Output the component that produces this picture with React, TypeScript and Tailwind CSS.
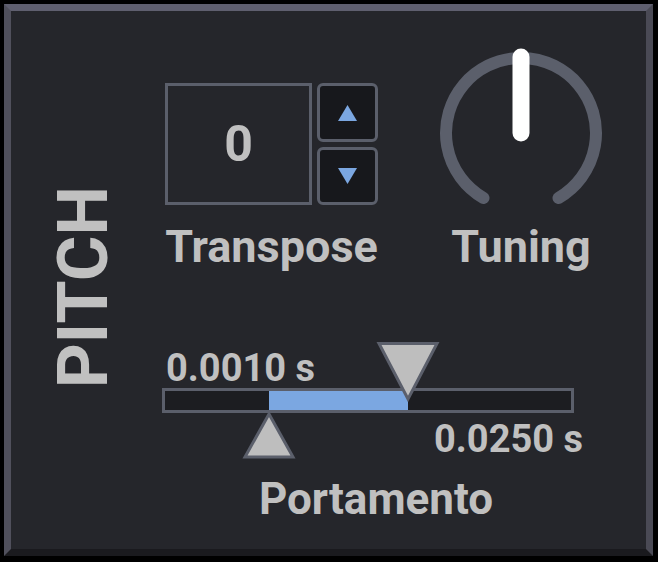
import React from "react";

const font = { fontFamily: "Roboto, 'Noto Sans', sans-serif" };

function Knob() {
  // 300° arc, gap at the bottom
  const cx = 85;
  const cy = 85;
  const r = 75;
  const start = (-150 * Math.PI) / 180;
  const end = (150 * Math.PI) / 180;
  const x1 = cx + r * Math.sin(start);
  const y1 = cy - r * Math.cos(start);
  const x2 = cx + r * Math.sin(end);
  const y2 = cy - r * Math.cos(end);
  return (
    <svg width="170" height="170" viewBox="0 0 170 170">
      <path
        d={`M ${x1} ${y1} A ${r} ${r} 0 1 1 ${x2} ${y2}`}
        fill="none"
        stroke="#5b5f6b"
        strokeWidth="12"
        strokeLinecap="round"
      />
      <line x1={cx} y1={cy} x2={cx} y2={9} stroke="#ffffff" strokeWidth="17" strokeLinecap="round" />
    </svg>
  );
}

function Stepper() {
  return (
    <div className="flex gap-[5px]">
      <div className="w-[147px] h-[122px] border-[3px] border-[#5b5f6b] flex items-center justify-center">
        <span className="text-[50px] font-bold text-[#c0c0c0] leading-none">0</span>
      </div>
      <div className="flex flex-col gap-[5px]">
        <button className="w-[61px] h-[59px] rounded-[6px] border-[3px] border-[#5b5f6b] bg-[#17181c] flex items-center justify-center">
          <svg width="19" height="16" viewBox="0 0 19 16">
            <polygon points="9.5,0 19,16 0,16" fill="#7ba7e1" />
          </svg>
        </button>
        <button className="w-[61px] h-[58px] rounded-[6px] border-[3px] border-[#5b5f6b] bg-[#17181c] flex items-center justify-center">
          <svg width="19" height="16" viewBox="0 0 19 16">
            <polygon points="0,0 19,0 9.5,16" fill="#7ba7e1" />
          </svg>
        </button>
      </div>
    </div>
  );
}

function Portamento() {
  return (
    <div className="relative w-[412px] h-[116px]">
      <div className="absolute left-0 top-[46px] w-[412px] h-[25px] border-[3px] border-[#5b5f6b] bg-[#1c1d21]">
        <div className="absolute left-[104px] top-0 w-[139px] h-[19px] bg-[#7ba7e1]" />
      </div>
      <span className="absolute left-[4px] top-[7px] text-[38px] font-bold leading-none text-[#c0c0c0] whitespace-nowrap">
        0.0010 s
      </span>
      <span className="absolute left-[272px] top-[78px] text-[38px] font-bold leading-none text-[#c0c0c0] whitespace-nowrap">
        0.0250 s
      </span>
      <svg className="absolute left-0 top-0 overflow-visible" width="412" height="116">
        <polygon points="217,1.5 275,1.5 246,57" fill="#bebebe" stroke="#5b5f6b" strokeWidth="3" strokeLinejoin="miter" />
        <polygon points="107,72 131,115 83,115" fill="#bebebe" stroke="#5b5f6b" strokeWidth="3" />
      </svg>
    </div>
  );
}

export default function App() {
  return (
    <div className="w-[658px] h-[562px] bg-black pt-[4px] pl-[4px]" style={font}>
      <div className="w-[649px] h-[552px] border-[7px] border-t-[#5f5f6f] border-l-[#50505c] border-r-[#4a4a55] border-b-[#1a1a1e] bg-[#25262b] flex pl-[38px] pt-[37px]">
        <div className="mt-[138px] self-start w-[68px] flex justify-center">
          <span className="block [writing-mode:vertical-rl] rotate-180 text-[70px] font-bold leading-none text-[#c0c0c0]">
            PITCH
          </span>
        </div>
        <div className="ml-[45px] flex flex-col">
          <div className="flex items-start ml-[3px]">
            <div className="mt-[35px] flex flex-col items-center">
              <Stepper />
              <span className="mt-[19px] text-[45px] font-bold leading-none text-[#c0c0c0]">Transpose</span>
            </div>
            <div className="ml-[58px] flex flex-col items-center">
              <Knob />
              <span className="mt-[6px] text-[45px] font-bold leading-none text-[#c0c0c0]">Tuning</span>
            </div>
          </div>
          <div className="mt-[73px]">
            <Portamento />
          </div>
          <div className="mt-[19px] w-[412px] pl-[16px] text-center text-[44px] font-bold leading-none text-[#c0c0c0]">
            Portamento
          </div>
        </div>
      </div>
    </div>
  );
}
